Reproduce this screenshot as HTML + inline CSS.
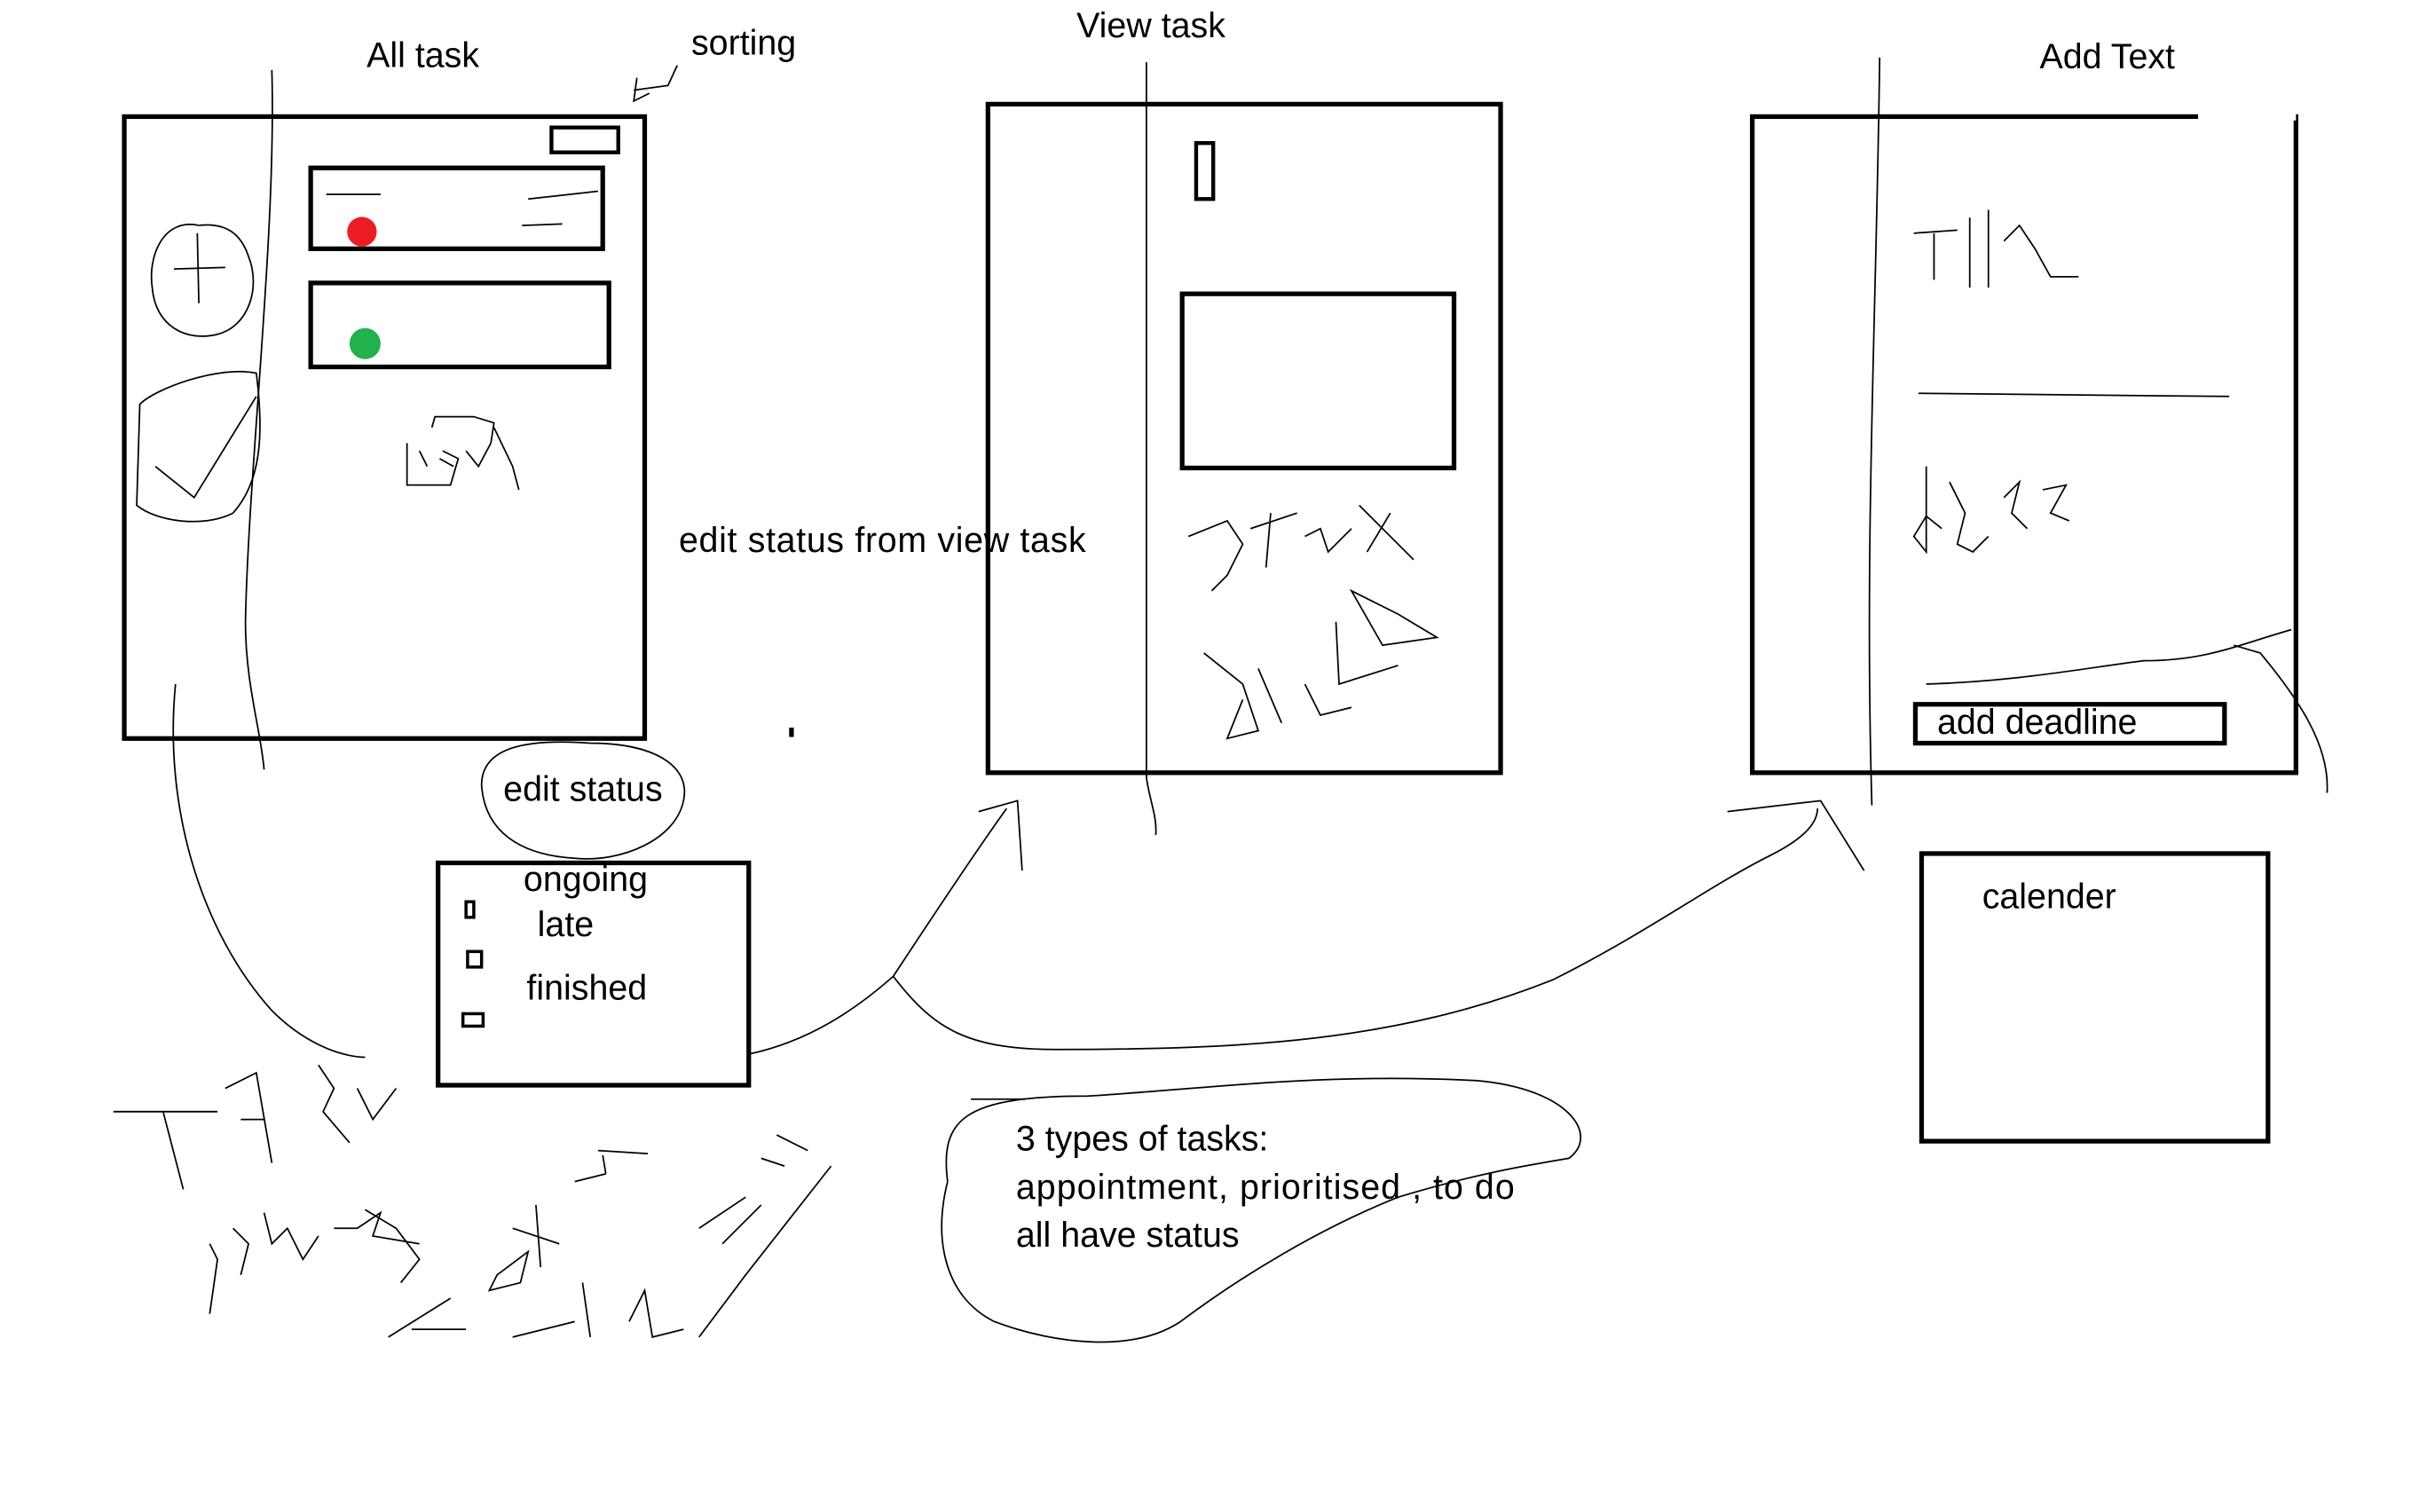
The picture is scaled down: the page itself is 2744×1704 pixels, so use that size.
<!DOCTYPE html>
<html><head><style>html,body{margin:0;padding:0;background:#fff;}svg{display:block}</style></head>
<body>
<svg width="2744" height="1704" viewBox="0 0 1567.5 972.5" preserveAspectRatio="none" xmlns="http://www.w3.org/2000/svg" font-family="Liberation Sans, sans-serif" font-size="22.5">
<rect width="1600" height="1000" fill="#fff"/>
<g fill="none" stroke="#000" stroke-width="3">
<rect x="80" y="75" width="335" height="400"/>
<rect x="355" y="82" width="43" height="16" stroke-width="2.5"/>
<rect x="200" y="108" width="188" height="52"/>
<rect x="200" y="182" width="192" height="54"/>
<rect x="636" y="67" width="330" height="430"/>
<rect x="770" y="92" width="11" height="36" stroke-width="2.5"/>
<rect x="761" y="189" width="175" height="112"/>
<rect x="1128" y="75" width="350" height="422"/>
<rect x="1233" y="453" width="199" height="25"/>
<rect x="1237" y="549" width="223" height="185"/>
<rect x="282" y="555" width="200" height="143"/>
<rect x="300" y="580" width="5" height="10" stroke-width="2"/>
<rect x="301" y="612" width="9" height="10" stroke-width="2"/>
<rect x="298" y="652" width="13" height="8" stroke-width="2"/>
</g>
<circle cx="233" cy="149" r="9.5" fill="#ed1c24"/>
<circle cx="235" cy="221" r="10" fill="#22b14c"/>
<g fill="none" stroke="#000" stroke-width="1">
<path d="M175 45 C178 150 160 300 158 400 C158 440 168 470 170 495"/>
<path d="M738 40 L738 500 C740 515 745 525 744 537"/>
<path d="M1210 37 C1208 200 1200 350 1205 518"/>
<path d="M113 440 C105 520 130 600 175 650 C200 675 225 680 235 680"/>
<path d="M482 678 C520 670 550 650 575 628 C600 590 630 545 648 520"/>
<path d="M630 522 L655 515 L658 560"/>
<path d="M575 628 C600 660 620 675 680 675 C800 675 900 670 1000 630 C1060 600 1100 570 1140 550 C1160 540 1170 530 1170 520"/>
<path d="M1112 522 L1172 515 L1200 560"/>
<path d="M310 505 C310 480 340 475 380 478 C420 478 445 492 440 515 C435 540 400 555 370 552 C335 550 312 535 310 505 Z"/>
<path d="M625 707 L660 707"/>
<path d="M610 760 C605 720 620 705 700 705 C780 700 850 690 950 695 C1010 700 1030 730 1010 745 C980 750 950 755 900 770 C850 790 800 820 760 850 C730 870 680 865 640 850 C610 835 600 800 610 760"/>
<path d="M1240 440 C1300 438 1340 430 1380 425 C1420 425 1440 415 1475 405"/>
<path d="M1438 415 L1455 420 C1480 450 1500 480 1498 510"/>
<path d="M128 145 C105 140 95 165 98 185 C100 210 120 220 140 215 C160 210 168 185 160 165 C155 150 145 143 128 145 M127 150 L128 195 M112 173 L145 172"/>
<path d="M90 260 C100 250 140 235 165 240 C170 280 168 310 150 330 C130 340 100 335 88 325 Z M100 300 L125 320 L165 255"/>
<path d="M210 125 L245 125 M340 128 L385 123 M336 145 L362 144"/>
<path d="M262 285 L262 312 L290 312 L295 295 L285 290 M270 290 L275 300 M283 295 L292 300 M300 290 L308 300 L316 285 L318 272 L305 268 L280 268 L278 275 M318 275 L330 300 L334 315"/>
<path d="M1232 150 L1260 148 M1245 150 L1245 180 M1268 140 L1268 185 M1280 135 L1280 185 M1290 155 L1300 145 L1310 160 L1320 178 L1338 178"/>
<path d="M1235 253 L1435 255"/>
<path d="M1240 300 L1240 355 L1232 345 L1240 332 L1250 340 M1255 310 L1265 330 L1260 350 L1270 355 L1280 345 M1290 320 L1300 310 L1295 330 L1305 340 M1315 315 L1330 312 L1320 330 L1332 335"/>
<path d="M765 345 L790 335 L800 350 L790 370 L780 380 M805 340 L835 330 M818 330 L815 365 M840 345 L850 340 L855 355 L870 340 M875 325 L910 360 M895 330 L880 355"/>
<path d="M775 420 L800 440 L810 470 L790 475 L800 450 M810 430 L825 465 M840 440 L850 460 L870 455 M860 400 L862 440 L900 428 M870 380 L900 395 L925 410 L890 415 Z"/>
<path d="M73 715 L140 715 M105 715 L118 765 M145 700 L165 690 L175 748 M155 720 L170 720 M205 685 L215 700 L208 715 L225 735 M230 700 L240 720 L255 700"/>
<path d="M135 800 L140 810 L135 845 M150 790 L160 800 L155 820 M170 780 L175 800 L185 790 L195 810 L205 795 M215 790 L230 790 L245 780 L240 795 L270 800 M235 778 L255 790 L270 810 L258 825"/>
<path d="M320 820 L340 805 L335 825 L315 830 Z M330 790 L360 800 M345 775 L348 815 M370 760 L390 755 M385 740 L417 742 M388 743 L390 755"/>
<path d="M250 860 L290 835 M265 855 L300 855 M330 860 L370 850 M375 825 L380 860 M405 850 L415 830 L420 860 L440 855"/>
<path d="M450 790 L480 770 M465 800 L490 775 M500 730 L520 740 M490 745 L505 750 M450 860 L480 820 L535 750"/>
<path d="M408 58 L430 55 L436 42 M410 50 L408 65 L418 60"/>
<path d="M1415 75 L1478 75" stroke="#fff" stroke-width="5"/>
</g>
<rect x="508" y="468" width="3" height="6" fill="#000"/>
<g fill="#000">
<text x="236" y="43">All task</text>
<text x="445" y="35">sorting</text>
<text x="693" y="24">View task</text>
<text x="1313" y="44">Add Text</text>
<text x="437" y="355" textLength="262">edit status from view task</text>
<text x="324" y="515">edit status</text>
<text x="337" y="573">ongoing</text>
<text x="346" y="602">late</text>
<text x="339" y="643">finished</text>
<text x="1247" y="472">add deadline</text>
<text x="1276" y="584">calender</text>
<text x="654" y="740">3 types of tasks:</text>
<text x="654" y="771" textLength="321">appointment, prioritised , to do</text>
<text x="654" y="802">all have status</text>
</g>
<rect x="1400" y="25" width="90" height="22" fill="#fff"/>
</svg>
</body></html>
